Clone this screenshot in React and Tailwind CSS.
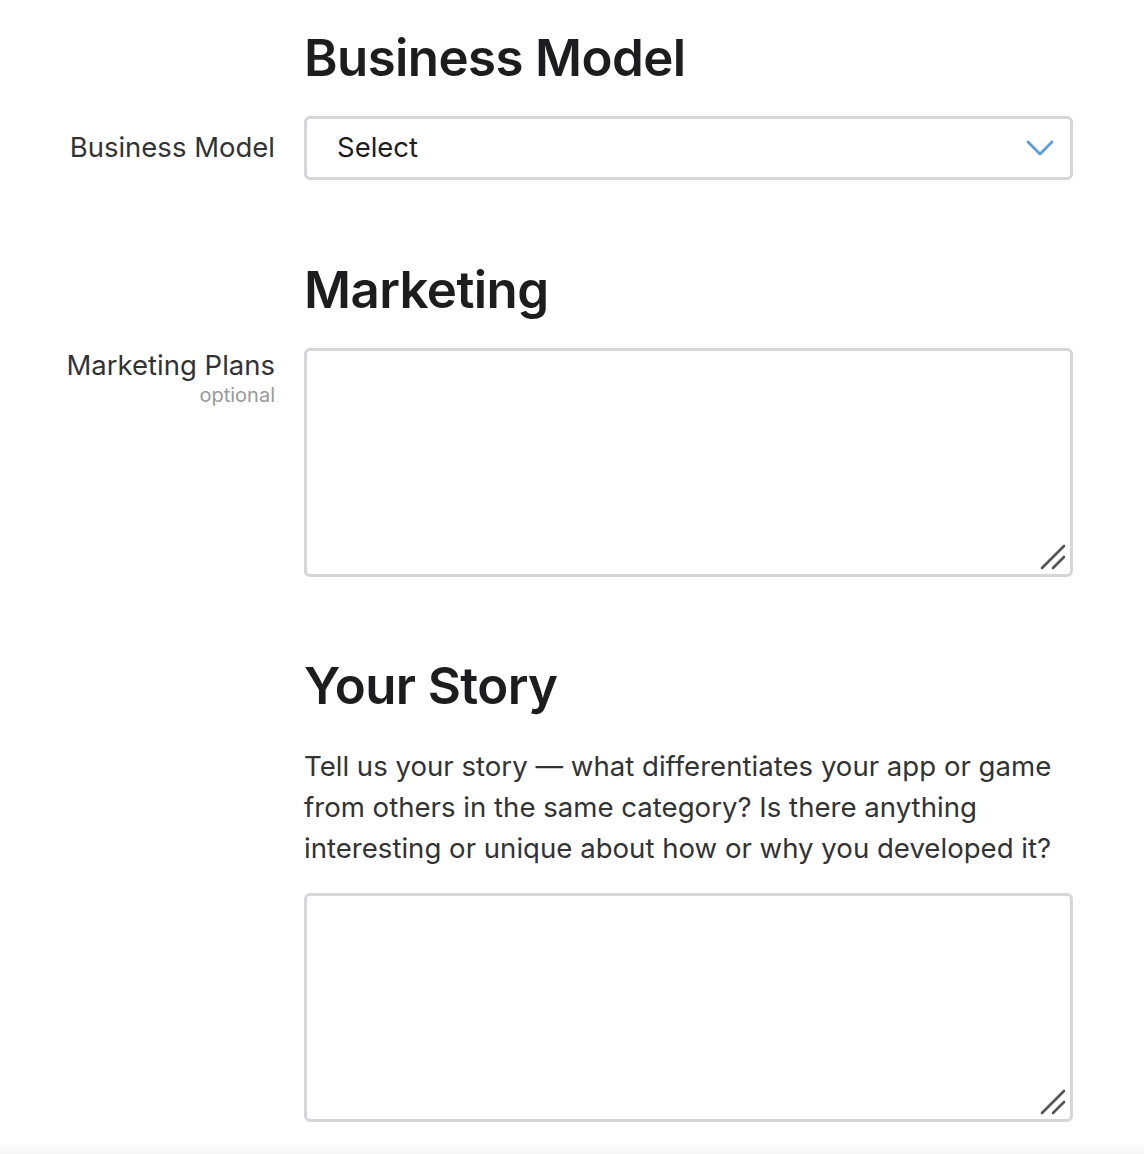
import React from "react";

const font = { fontFamily: "Inter, 'Liberation Sans', sans-serif" };

function Handle() {
  return (
    <svg className="absolute right-[3px] bottom-[3px]" width="28" height="28" viewBox="0 0 28 28">
      <line x1="3" y1="25" x2="25" y2="3" stroke="#555" strokeWidth="2.6" strokeLinecap="round" />
      <line x1="14" y1="25" x2="25" y2="14" stroke="#555" strokeWidth="2.6" strokeLinecap="round" />
    </svg>
  );
}

function Area() {
  return (
    <div className="relative h-[229px] w-full rounded-[6px] border-[3px] border-[#d6d6da] bg-white">
      <textarea className="h-full w-full resize-none bg-transparent outline-none" />
      <Handle />
    </div>
  );
}

export default function App() {
  return (
    <div className="flex min-h-[1154px] w-[1144px] flex-col bg-white text-[#1d1d1f]" style={font}>
      <div className="grid grid-cols-[275px_769px] gap-x-[29px] pt-[28px]">
        <div />
        <h2 className="text-[51px] font-semibold leading-[60px] tracking-[-0.6px]">Business Model</h2>

        <div className="mt-[28px] flex h-[64px] items-center justify-end text-[27.5px] text-[#333]">Business Model</div>
        <div className="mt-[28px] flex h-[64px] items-center justify-between rounded-[6px] border-[3px] border-[#d6d6da] bg-white pl-[30px] pr-[16px] text-[27.5px] text-[#1d1d1f]">
          <span>Select</span>
          <svg width="28" height="18" viewBox="0 0 28 18">
            <polyline points="2,3 14,15 26,3" fill="none" stroke="#5b9bd8" strokeWidth="2.8" strokeLinecap="round" strokeLinejoin="round" />
          </svg>
        </div>

        <div />
        <h2 className="mt-[80px] text-[51px] font-semibold leading-[60px] tracking-[-0.6px]">Marketing</h2>

        <div className="mt-[28px] flex flex-col items-end">
          <span className="text-[27.5px] leading-[34px] text-[#333]">Marketing Plans</span>
          <span className="text-[20px] leading-[26px] text-[#999]">optional</span>
        </div>
        <div className="mt-[28px]">
          <Area />
        </div>

        <div />
        <div className="mt-[79px]">
          <h2 className="text-[51px] font-semibold leading-[60px] tracking-[-0.6px]">Your Story</h2>
          <p className="mt-[30px] text-[27.6px] leading-[41px] text-[#333]">
            Tell us your story — what differentiates your app or game from others in the same category? Is there anything interesting or unique about how or why you developed it?
          </p>
          <div className="mt-[24px]">
            <Area />
          </div>
        </div>
      </div>
      <div className="flex-1" />
      <div className="h-[14px] bg-gradient-to-b from-white to-[#f6f6f7]" />
    </div>
  );
}
